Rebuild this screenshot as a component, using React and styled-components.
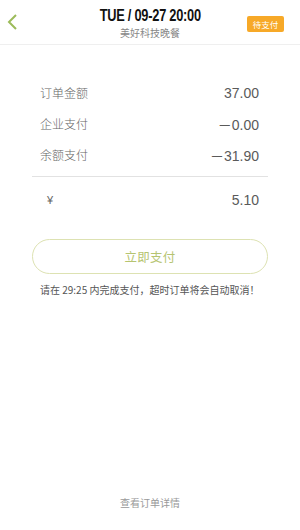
import React from 'react';
import styled, { createGlobalStyle } from 'styled-components';

const GlobalStyle = createGlobalStyle`
  html, body {
    margin: 0;
    padding: 0;
    background: #fff;
  }
  body {
    font-family: "Helvetica Neue", "Liberation Sans", "Noto Sans CJK SC", sans-serif;
    color: #555;
  }
`;

const Page = styled.div`
  width: 300px;
  height: 530px;
  display: flex;
  flex-direction: column;
  background: #fff;
`;

const Header = styled.header`
  height: 44px;
  display: grid;
  grid-template-columns: 60px 1fr 60px;
  align-items: center;
  border-bottom: 1px solid #efefef;
  box-sizing: content-box;
`;

const BackButton = styled.div`
  padding-left: 6px;
  display: flex;
  align-items: center;
  height: 100%;
`;

const TitleBlock = styled.div`
  display: flex;
  flex-direction: column;
  align-items: center;
  padding-top: 3px;
`;

const Title = styled.div`
  font-family: "Liberation Sans", sans-serif;
  font-weight: bold;
  font-size: 16px;
  line-height: 18px;
  color: #111;
  letter-spacing: -0.3px;
  transform: scaleX(0.8);
  white-space: nowrap;
`;

const Subtitle = styled.div`
  font-family: "Noto Sans CJK SC", sans-serif;
  font-size: 10px;
  line-height: 14px;
  color: #888;
  margin-top: 1px;
`;

const Badge = styled.div`
  justify-self: end;
  margin-right: 16px;
  width: 37px;
  height: 16px;
  border-radius: 2px;
  background: #f7a928;
  color: #fff;
  font-family: "Noto Sans CJK SC", sans-serif;
  font-size: 8.5px;
  line-height: 16px;
  text-align: center;
  margin-top: 3px;
`;

const Summary = styled.section`
  margin: 0 32px;
  padding-top: 32px;
`;

const Row = styled.div`
  display: flex;
  justify-content: space-between;
  align-items: center;
  height: 31px;
  padding: 0 9px 0 8px;
`;

const Label = styled.span`
  font-family: "Noto Sans CJK SC", sans-serif;
  font-size: 12px;
  font-weight: 300;
  color: #666;
`;

const Value = styled.span`
  font-family: "Liberation Sans", "Noto Sans CJK SC", sans-serif;
  font-size: 14px;
  color: #5a5a5a;
`;

const Divider = styled.div`
  height: 1px;
  background: #e2e2e2;
  margin: 6px 0 7px;
`;

const Currency = styled.span`
  font-family: "Liberation Sans", sans-serif;
  font-size: 11px;
  color: #666;
  padding-left: 7px;
`;

const PayButton = styled.button`
  display: block;
  margin: 24px 32px 0;
  width: 236px;
  height: 35px;
  border: 1px solid #dde2b2;
  border-radius: 18px;
  background: #fff;
  color: #b6c470;
  font-family: "Noto Sans CJK SC", sans-serif;
  font-size: 12.5px;
  letter-spacing: 0.3px;
  cursor: pointer;
`;

const Notice = styled.p`
  margin: 9px 0 0 40px;
  font-family: "Noto Sans CJK SC", sans-serif;
  font-size: 10px;
  line-height: 13px;
  color: #555;
`;

const Footer = styled.div`
  margin-top: auto;
  padding-bottom: 20px;
  text-align: center;
  font-family: "Noto Sans CJK SC", sans-serif;
  font-size: 10px;
  color: #999;
`;

const rows = [
  { label: '订单金额', value: '37.00' },
  { label: '企业支付', value: '－0.00' },
  { label: '余额支付', value: '－31.90' },
];

const App = () => (
  <Page>
    <GlobalStyle />
    <Header>
      <BackButton>
        <svg width="12" height="18" viewBox="0 0 12 18">
          <path d="M10 2 L3 9 L10 16" fill="none" stroke="#9cbb5a" strokeWidth="2" />
        </svg>
      </BackButton>
      <TitleBlock>
        <Title>TUE / 09-27 20:00</Title>
        <Subtitle>美好科技晚餐</Subtitle>
      </TitleBlock>
      <Badge>待支付</Badge>
    </Header>
    <Summary>
      {rows.map((r) => (
        <Row key={r.label}>
          <Label>{r.label}</Label>
          <Value>{r.value}</Value>
        </Row>
      ))}
      <Divider />
      <Row>
        <Currency>¥</Currency>
        <Value>5.10</Value>
      </Row>
    </Summary>
    <PayButton>立即支付</PayButton>
    <Notice>请在 29:25 内完成支付，超时订单将会自动取消！</Notice>
    <Footer>查看订单详情</Footer>
  </Page>
);

export default App;
